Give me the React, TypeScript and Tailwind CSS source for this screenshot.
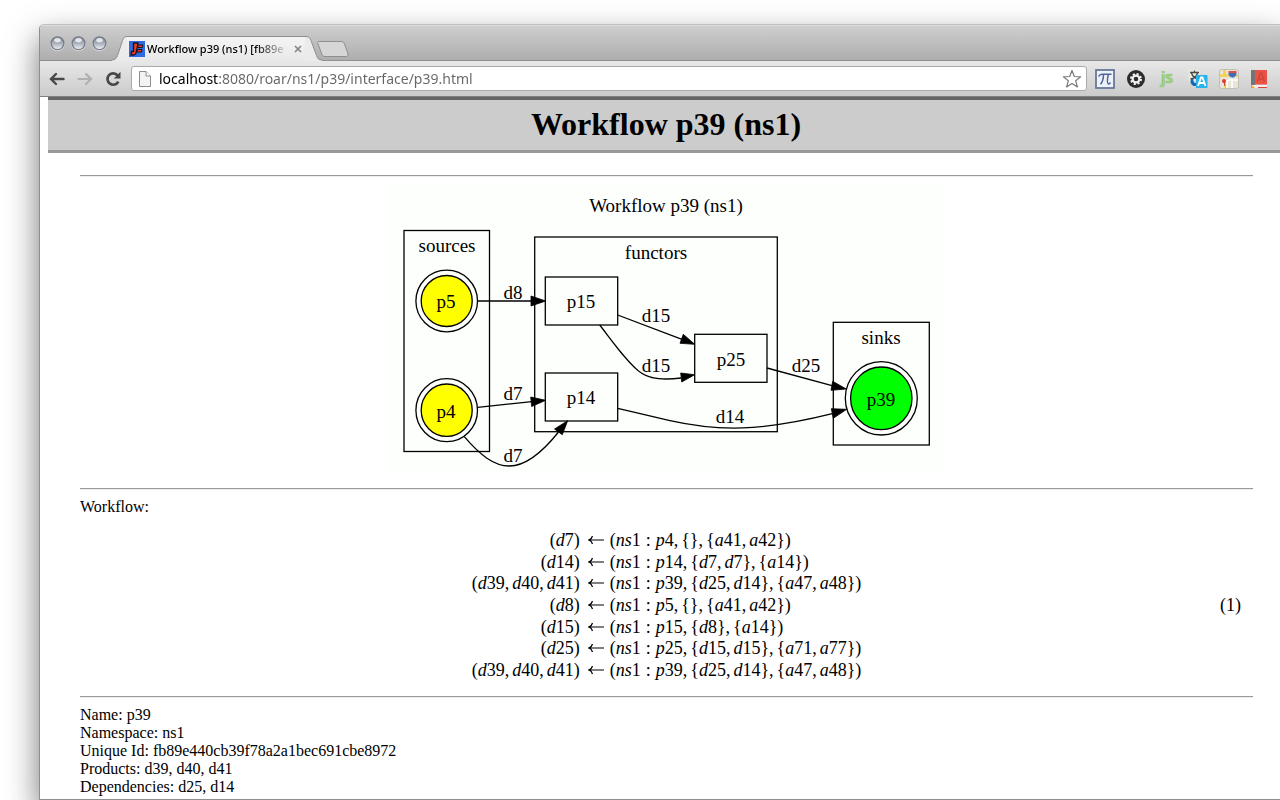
import React from "react";

const equations: [string, string][] = [
  ["(d7)", "(ns1:p4,{},{a41,a42})"],
  ["(d14)", "(ns1:p14,{d7,d7},{a14})"],
  ["(d39,d40,d41)", "(ns1:p39,{d25,d14},{a47,a48})"],
  ["(d8)", "(ns1:p5,{},{a41,a42})"],
  ["(d15)", "(ns1:p15,{d8},{a14})"],
  ["(d25)", "(ns1:p25,{d15,d15},{a71,a77})"],
  ["(d39,d40,d41)", "(ns1:p39,{d25,d14},{a47,a48})"],
];

const details = [
  "Name: p39",
  "Namespace: ns1",
  "Unique Id: fb89e440cb39f78a2a1bec691cbe8972",
  "Products: d39, d40, d41",
  "Dependencies: d25, d14",
];

function MathText({ source }: { source: string }) {
  return (
    <>
      {(source.match(/[a-z]+|:|,|[^a-z:,]+/g) ?? []).map((token, i) => {
        if (/[a-z]/.test(token)) return <i key={i}>{token}</i>;
        if (token === ":") return <span key={i} className="mx-[5px]">:</span>;
        if (token === ",") return <span key={i} className="mr-[3px]">,</span>;
        return <span key={i}>{token}</span>;
      })}
    </>
  );
}

function WindowButton({ label, id }: { label: string; id: string }) {
  return (
    <button aria-label={label} className="block h-[15px] w-[15px]">
      <svg viewBox="0 0 15 15" className="block h-full w-full">
        <defs>
          <linearGradient id={id} x1="0" y1="0" x2="0" y2="1">
            <stop offset="0" stopColor="#7f8794" />
            <stop offset="0.5" stopColor="#a9b0bb" />
            <stop offset="1" stopColor="#f4f5f6" />
          </linearGradient>
        </defs>
        <circle cx="7.5" cy="8" r="7" fill="#e6e6e6" />
        <circle cx="7.5" cy="7.3" r="6.4" fill={`url(#${id})`} stroke="#737a87" strokeWidth="1.2" />
        <ellipse cx="7.5" cy="4.2" rx="3.2" ry="2.1" fill="#fff" opacity="0.75" />
      </svg>
    </button>
  );
}

function TabStrip() {
  return (
    <div className="flex h-9 items-end bg-linear-to-b from-[#cfcfcf] to-[#adadad] shadow-[inset_0_1px_0_#dedede,inset_0_-1px_0_#909090]">
      <div className="flex w-[72px] items-center gap-[6px] self-start pt-[11px] pl-[10px]">
        <WindowButton label="Close window" id="ball-close" />
        <WindowButton label="Minimize window" id="ball-minimize" />
        <WindowButton label="Zoom window" id="ball-zoom" />
      </div>
      <div className="flex h-[25px]">
        <svg viewBox="0 0 15 25" className="h-[25px] w-[15px]">
          <path d="M0 25V24C3.500 24 4.500 22 5.500 19.500L10.500 4.500C11.500 1.800 12.500 .5 15 .5V25Z" fill="#ebebeb" />
          <path d="M0 24C3.500 24 4.500 22 5.500 19.500L10.500 4.500C11.500 1.800 12.500 .5 15 .5" fill="none" stroke="#8e8e8e" />
        </svg>
        <div className="flex w-[178px] items-center border-t border-[#8e8e8e] bg-linear-to-b from-[#f4f4f4] to-[#e8e8e8] pl-[2px]">
          <svg viewBox="0 0 16 16" className="h-4 w-4 shrink-0">
            <rect width="16" height="16" fill="#2f6ae0" />
            <path d="M4.500 2H9L7.200 11.500C6.900 13 6 14 4.500 14H2L2.500 10.500H4.500Z" fill="#f03c1c" stroke="#171327" strokeWidth="1.300" />
            <path d="M9.300 4H13.800L13.300 6.500H8.800ZM8.600 8.500H13L12.500 11H8.100Z" fill="#f03c1c" stroke="#171327" strokeWidth="1" />
          </svg>
          <div className="ml-[2px] w-[142px] bg-[linear-gradient(90deg,#000_108px,#00000020_138px)] bg-clip-text font-['Noto_Sans',sans-serif] text-[11px] leading-4 font-medium whitespace-nowrap text-transparent">
            Workflow p39 (ns1) [fb89e
          </div>
          <button aria-label="Close tab" className="ml-[5px]">
            <svg viewBox="0 0 8 8" className="h-2 w-2" stroke="#858585" strokeWidth="1.700">
              <path d="M1 1L7 7M7 1L1 7" />
            </svg>
          </button>
        </div>
        <svg viewBox="0 0 17 25" className="h-[25px] w-[17px]">
          <path d="M0 25V.5H1C4 .5 5 2 6 4.500L11.500 19.500C12.500 22.500 13.500 24 17 24V25Z" fill="#ebebeb" />
          <path d="M0 .5H1C4 .5 5 2 6 4.500L11.500 19.500C12.500 22.500 13.500 24 17 24" fill="none" stroke="#8e8e8e" />
        </svg>
        <button aria-label="New tab" className="-ml-[6px] self-start pt-[4px]">
          <svg viewBox="0 0 33 18" className="h-[18px] w-[33px]">
            <path d="M3 1.500H25C27 1.500 28 2.500 28.500 4L32 14C32.500 15.500 31.500 16.500 30 16.500H9C7.500 16.500 6.500 15.800 6 14.500L1.800 3.500C1.400 2.300 2 1.500 3 1.500Z" fill="#d6d6d6" stroke="#8f8f8f" />
          </svg>
        </button>
      </div>
    </div>
  );
}

function Toolbar() {
  return (
    <div className="flex h-9 items-center border-b border-[#808080] bg-linear-to-b from-[#e8e8e8] to-[#cbcbcb] pr-[12px] pl-[9px]">
      <div className="flex w-[82px] gap-3">
        <button aria-label="Back">
          <svg viewBox="0 0 16 16" className="h-4 w-4" fill="none" stroke="#484848" strokeWidth="2.400" strokeLinecap="round">
            <path d="M7 3L2 8L7 13M2.500 8H14.500" />
          </svg>
        </button>
        <button aria-label="Forward">
          <svg viewBox="0 0 16 16" className="h-4 w-4" fill="none" stroke="#b0b0b0" strokeWidth="2.200" strokeLinecap="round">
            <path d="M9 3L14 8L9 13M13.500 8H1.500" />
          </svg>
        </button>
        <button aria-label="Reload">
          <svg viewBox="0 0 16 16" className="h-4 w-4">
            <path d="M12.600 4.400A5.700 5.700 0 1 0 13.300 10.600" fill="none" stroke="#484848" strokeWidth="2.700" />
            <path d="M15.500 .8V7.500H8.800Z" fill="#484848" />
          </svg>
        </button>
      </div>
      <label className="flex h-[25px] flex-1 items-center rounded-[3px] border border-[#aaa] bg-white pr-[4px] pl-[7px]">
        <svg viewBox="0 0 12 16" className="h-4 w-3">
          <path d="M.5 .5H7L11.500 5V15.500H.5Z" fill="#f3f3f3" stroke="#8d8d8d" />
          <path d="M7 .5V5H11.500" fill="#fff" stroke="#8d8d8d" />
        </svg>
        <input
          aria-label="Address"
          defaultValue="localhost:8080/roar/ns1/p39/interface/p39.html"
          className="ml-2 min-w-0 flex-1 bg-[linear-gradient(90deg,#000_60px,#666_60px)] bg-clip-text font-['Noto_Sans',sans-serif] text-sm leading-5 text-transparent outline-none"
        />
        <svg viewBox="0 0 20 20" className="h-5 w-5">
          <path d="M10 1.500L12.300 7.500L18.600 7.900L13.700 11.800L15.400 18L10 14.500L4.600 18L6.300 11.800L1.400 7.900L7.700 7.500Z" fill="#fff" stroke="#787878" strokeWidth="1.200" strokeLinejoin="round" />
        </svg>
      </label>
      <div className="ml-2 flex items-center gap-[11px]">
        <button aria-label="Math">
          <svg viewBox="0 0 20 20" className="h-5 w-5">
            <rect x="1" y="1" width="18" height="18" fill="#eef1f7" stroke="#66789a" strokeWidth="1.800" />
            <path d="M3.500 7.500C4.500 5.500 5.500 5.300 7 5.300H16.500M8.500 5.500C8.500 10 7.500 13 5.500 15.300M13.300 5.500C12.300 10 12 14 13.300 14.800C14 15.200 15 14.500 15.300 13.500" fill="none" stroke="#4c659a" strokeWidth="1.500" />
          </svg>
        </button>
        <button aria-label="Settings">
          <svg viewBox="0 0 20 20" className="h-5 w-5">
            <circle cx="10" cy="10" r="9" fill="#2c2c2c" />
            <circle cx="10" cy="10" r="5" fill="none" stroke="#f2f2f2" strokeWidth="2" strokeDasharray="2.100 1.827" />
            <circle cx="10" cy="10" r="3.400" fill="none" stroke="#f2f2f2" strokeWidth="2.200" />
          </svg>
        </button>
        <button aria-label="JavaScript" className="h-5 w-5 pb-1 text-center font-['Open_Sans',sans-serif] text-[16px] leading-4 font-semibold text-[#9bdc74] [text-shadow:0_0_1px_#55803f]">
          js
        </button>
        <button aria-label="Translate">
          <svg viewBox="0 0 20 20" className="h-5 w-5">
            <path d="M.5 .5H12V12H.5Z" fill="#e9e7de" />
            <path d="M2 3.500H11M6.500 1.500V3.500M3.500 4C4.500 7.500 7 9.500 10.500 10M9.500 4C8.500 7.500 6 9.500 2.500 10" fill="none" stroke="#4a4a45" strokeWidth="1.300" />
            <path d="M3 10C1.500 14 4 17.500 8 17V19L12 15L8 11.500V14C6 14.200 5 12.500 5.500 10Z" fill="#1568b3" />
            <rect x="8" y="6" width="11.500" height="13" rx="1" fill="#25b4ee" />
            <path d="M10 17L13 8.500H14.500L17.500 17M11.500 14H16" fill="none" stroke="#fff" strokeWidth="1.800" />
          </svg>
        </button>
        <button aria-label="Maps">
          <svg viewBox="0 0 20 20" className="h-5 w-5">
            <rect x=".5" y=".5" width="19" height="19" rx="2" fill="#e9e5d9" stroke="#c2beb2" />
            <path d="M1 6.500H19M5.500 1V6M6.500 13V19" fill="none" stroke="#f4d14d" strokeWidth="2.600" />
            <path d="M8 19V12L13 10V19M13 11H19" fill="none" stroke="#fff" strokeWidth="1.500" />
            <path d="M9.500 3.500H17.500C18.500 6.500 16.500 8 13.500 9C10.500 8 8.500 6.500 9.500 3.500Z" fill="#426cb4" stroke="#e8ecf4" strokeWidth=".6" />
            <path d="M9.500 2H17.500V4H9.500Z" fill="#da5045" />
            <circle cx="5" cy="12" r="2" fill="#e23c36" />
            <path d="M5 13L6 17" stroke="#b33" strokeWidth="1" />
          </svg>
        </button>
        <button aria-label="Dictionary">
          <svg viewBox="0 0 18 20" className="h-5 w-[18px]">
            <rect x="1" y="1" width="4" height="18" fill="#747474" />
            <path d="M5 1H17V15.500H5Z" fill="#e95244" />
            <path d="M2 19V16H17V19Z" fill="#f5eeee" />
            <path d="M1 15.500L5 19H1Z" fill="#efa52d" />
            <path d="M8 18.500H17" stroke="#d84538" />
            <path d="M7.500 12.500L10.500 4H11.500L14.500 12.500M8.500 10H13.500" fill="none" stroke="#d0463a" strokeWidth="1.700" />
          </svg>
        </button>
      </div>
    </div>
  );
}

function WorkflowGraph() {
  return (
    <svg viewBox="0 0 557 288" className="mx-auto block h-[288px] w-[557px] bg-[#fdfffc]" role="img" aria-label="Workflow graph">
      <g fill="none" stroke="#000" strokeWidth="1.300">
        <rect x="16" y="46.500" width="85.500" height="221" />
        <rect x="146.700" y="53" width="242.600" height="194.700" />
        <rect x="445.300" y="138.300" width="96" height="122.700" />
        <rect x="157.300" y="93" width="72.400" height="48" />
        <rect x="157.300" y="189" width="72.400" height="48" />
        <rect x="306.700" y="150.300" width="72.300" height="48" />
        <circle cx="58.700" cy="117" r="30.800" />
        <circle cx="58.700" cy="117" r="25.500" fill="#ff0" />
        <ellipse cx="58.700" cy="226.200" rx="30.800" ry="31.500" />
        <ellipse cx="58.700" cy="226.200" rx="25.500" ry="26.200" fill="#ff0" />
        <ellipse cx="493.300" cy="214.300" rx="36" ry="36.700" />
        <ellipse cx="493.300" cy="214.300" rx="30.700" ry="31.300" fill="#0f0" />
        <path d="M89.500 117H144" />
        <path d="M89.700 223.300L144 217.700" />
        <path d="M76.300 252.700C92 271 106 282 121.300 282C139 282 157 265 170.500 248" />
        <path d="M229.700 131L294 155.300" />
        <path d="M211.700 141C225 158 241 181 253.700 189.300C262 195 278 196 293 194" />
        <path d="M229.700 224.300C247 228.500 264 232.500 282 236.700C330 247.500 373 247.500 444.300 229.700" />
        <path d="M379 184L444 201.700" />
      </g>
      <g fill="#000" stroke="#000" strokeWidth=".8">
        <path d="M143 112L157.700 117L143 122Z" />
        <path d="M142.700 213L157.700 216.300L143.700 222.500Z" />
        <path d="M179.700 236.700L174.300 250.700L166.500 245Z" />
        <path d="M306.700 160.300L292 159.300L295.300 150.300Z" />
        <path d="M306.700 190.700L293.700 198L292.700 189Z" />
        <path d="M458.700 225.300L445.300 234.300L443.300 224.700Z" />
        <path d="M458.300 205L443 206.300L444.700 197.300Z" />
      </g>
      <g className="font-['Liberation_Serif',serif] text-[19px]" textAnchor="middle">
        <text x="278" y="28">Workflow p39 (ns1)</text>
        <text x="59" y="68">sources</text>
        <text x="268" y="75">functors</text>
        <text x="493" y="160">sinks</text>
        <text x="58" y="124">p5</text>
        <text x="58" y="234">p4</text>
        <text x="193" y="124">p15</text>
        <text x="193" y="220">p14</text>
        <text x="343" y="182">p25</text>
        <text x="493" y="222">p39</text>
        <text x="125" y="115">d8</text>
        <text x="125" y="216">d7</text>
        <text x="125" y="278">d7</text>
        <text x="268" y="138">d15</text>
        <text x="268" y="188">d15</text>
        <text x="342" y="239">d14</text>
        <text x="418" y="188">d25</text>
      </g>
    </svg>
  );
}

function Rule() {
  return <hr className="h-[2px] border-t border-b border-t-[#999] border-b-[#eee]" />;
}

export default function App() {
  return (
    <div className="min-h-screen overflow-hidden bg-white pt-6 pl-[39px]">
      <div className="rounded-tl-[5px] border-t border-b border-l border-[#8f8f8f] border-t-[#c0c0c0] bg-white shadow-[0_14px_32px_rgba(0,0,0,0.55)]">
        <div className="overflow-hidden rounded-tl-[4px]">
          <TabStrip />
          <Toolbar />
        </div>
        <main className="pb-[3px] pl-2 font-['Liberation_Serif',serif] text-base leading-[18px] text-black">
          <h1 className="border-t-[3px] border-b-[3px] border-t-[#666] border-b-[#999] bg-[#ccc] pt-[5px] pb-[7px] pl-1 text-center text-[32px] leading-[38px] font-bold">
            Workflow p39 (ns1)
          </h1>
          <div className="pt-[22px] pr-[27px] pl-8">
            <Rule />
            <div className="pt-[7px] pb-4">
              <WorkflowGraph />
            </div>
            <Rule />
            <p className="mt-2">Workflow:</p>
            <div className="mt-[13px] mb-[15px] grid grid-cols-[1fr_auto_1fr] items-center text-[18px]">
              <div className="col-start-2 grid h-[152px] grid-cols-[auto_auto] grid-rows-7 items-center">
                {equations.map(([left, right], i) => (
                  <React.Fragment key={i}>
                    <span className="text-right">
                      <MathText source={left} />
                    </span>
                    <span className="flex items-center pl-2">
                      <svg viewBox="0 0 16 10" className="mr-[6px] h-[10px] w-4" fill="none" stroke="#000" strokeWidth="1.200">
                        <path d="M.8 5H16M4.500 1C4 3 2.500 4.500 .8 5C2.500 5.500 4 7 4.500 9" />
                      </svg>
                      <span>
                        <MathText source={right} />
                      </span>
                    </span>
                  </React.Fragment>
                ))}
              </div>
              <span className="pr-3 text-right">(1)</span>
            </div>
            <Rule />
            <div className="mt-2">
              {details.map((line) => (
                <p key={line}>{line}</p>
              ))}
            </div>
          </div>
        </main>
      </div>
    </div>
  );
}
